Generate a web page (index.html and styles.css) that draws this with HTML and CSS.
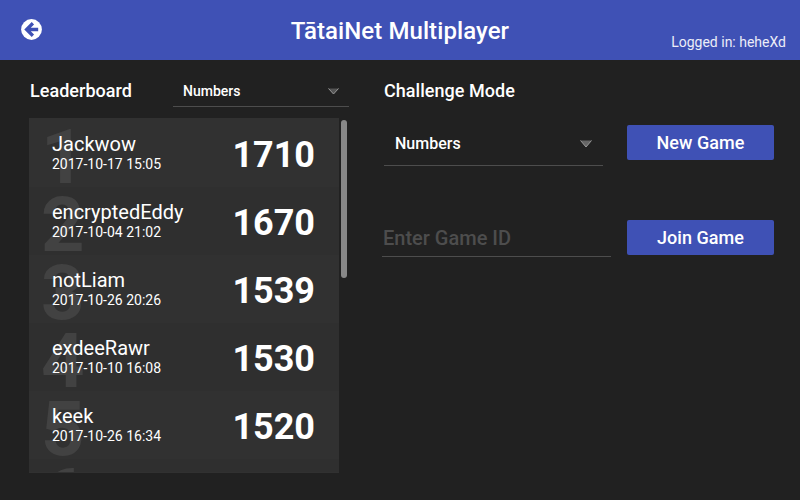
FILE: index.html
```
<!DOCTYPE html>
<html lang="en">
<head>
<meta charset="utf-8">
<title>TātaiNet Multiplayer</title>
<link rel="stylesheet" href="styles.css">
</head>
<body>
<header class="bar">
  <svg class="back" viewBox="0 0 21 21" width="21" height="21"><circle cx="10.5" cy="10.5" r="10.4" fill="#fff"/><path d="M17.200 10.500H6M11.900 4.300L5.600 10.500l6.300 6.200" fill="none" stroke="#3f51b5" stroke-width="3.300"/></svg>
  <h1 class="title">TātaiNet Multiplayer</h1>
  <div class="user">Logged in: heheXd</div>
</header>
<main class="content">
  <section class="left">
    <div class="head">
      <h2 class="heading">Leaderboard</h2>
      <div class="select small"><span>Numbers</span><svg class="arrow" viewBox="0 0 11 7" width="11" height="7"><path d="M.5.5h10l-5 5.500z" fill="#555"/><path d="M.5.5l5 5.500 5-5.500" fill="none" stroke="#999"/></svg></div>
    </div>
    <div class="board">
      <div class="list">
        <div class="row"><span class="rank">1</span><div class="who"><div class="name">Jackwow</div><div class="date">2017-10-17 15:05</div></div><div class="score">1710</div></div>
        <div class="row"><span class="rank">2</span><div class="who"><div class="name">encryptedEddy</div><div class="date">2017-10-04 21:02</div></div><div class="score">1670</div></div>
        <div class="row"><span class="rank">3</span><div class="who"><div class="name">notLiam</div><div class="date">2017-10-26 20:26</div></div><div class="score">1539</div></div>
        <div class="row"><span class="rank">4</span><div class="who"><div class="name">exdeeRawr</div><div class="date">2017-10-10 16:08</div></div><div class="score">1530</div></div>
        <div class="row"><span class="rank">5</span><div class="who"><div class="name">keek</div><div class="date">2017-10-26 16:34</div></div><div class="score">1520</div></div>
        <div class="row"><span class="rank">6</span></div>
      </div>
      <div class="thumb"></div>
    </div>
  </section>
  <section class="right">
    <h2 class="heading mode">Challenge Mode</h2>
    <div class="line first">
      <div class="select large"><span>Numbers</span><svg class="arrow" viewBox="0 0 12 8" width="12" height="8"><path d="M.5.5h11L6 7z" fill="#666"/><path d="M.5.5L6 7l5.500-6.500" fill="none" stroke="#999"/></svg></div>
      <button class="btn">New Game</button>
    </div>
    <div class="line">
      <div class="field">Enter Game ID</div>
      <button class="btn">Join Game</button>
    </div>
  </section>
</main>
</body>
</html>
```

FILE: styles.css
```
* { box-sizing: border-box; }
body {
  margin: 0;
  width: 800px;
  height: 500px;
  overflow: hidden;
  background: #212121;
  color: #fff;
  font-family: Roboto, sans-serif;
}
.bar {
  display: grid;
  grid-template-columns: 200px 400px 200px;
  height: 60px;
  background: #3f51b5;
}
.back { margin: 19px 0 0 21px; }
.title {
  margin: 0;
  padding-top: 15px;
  text-align: center;
  font-size: 24px;
  line-height: 32px;
  font-weight: 500;
  letter-spacing: 0.08px;
}
.user {
  padding: 34px 14px 0 0;
  text-align: right;
  font-size: 14px;
  line-height: 16px;
  color: #ecedf8;
}
.content { display: flex; height: 440px; }
.left { width: 349px; padding-left: 29px; }
.head { display: flex; justify-content: space-between; height: 58px; }
.heading {
  margin: 19px 0 0 1px;
  font-size: 18px;
  line-height: 24px;
  font-weight: 500;
  letter-spacing: 0.04px;
}
.select {
  display: flex;
  justify-content: space-between;
  align-items: center;
  border-bottom: 1px solid #4d4d4d;
  font-weight: 500;
}
.small {
  width: 176px;
  height: 31px;
  margin-top: 16px;
  padding: 0 10px;
  font-size: 14px;
}
.board { display: flex; gap: 2px; height: 355px; }
.list {
  width: 310px;
  padding-top: 1px;
  overflow: hidden;
  background: #313131;
}
.row {
  position: relative;
  display: flex;
  justify-content: space-between;
  height: 68px;
  padding: 13px 24px 0 23px;
  background: #313131;
}
.row:nth-child(even) { background: #2f2f2f; }
.rank {
  position: absolute;
  left: 12px;
  top: -7px;
  font-size: 76px;
  line-height: 90px;
  font-weight: 700;
  color: #424242;
}
.row:last-child { height: 13px; overflow: hidden; }
.who { position: relative; }
.name { font-size: 20px; line-height: 24px; white-space: nowrap; }
.date { font-size: 14px; line-height: 16px; white-space: nowrap; }
.score { font-size: 36px; line-height: 46px; font-weight: 700; }
.thumb {
  width: 6px;
  height: 158px;
  margin-top: 2px;
  border-radius: 3px;
  background: #888;
}
.right { padding-left: 34px; }
.mode { margin-left: 1px; }
.line { display: flex; justify-content: space-between; width: 391px; height: 95px; }
.first { margin-top: 17px; }
.btn {
  width: 147px;
  height: 35px;
  margin-top: 5px;
  padding: 0;
  border: 0;
  border-radius: 2px;
  background: #3f51b5;
  color: #fff;
  font: 500 18px/35px Roboto, sans-serif;
  letter-spacing: 0.04px;
}
.large {
  width: 219px;
  height: 46px;
  margin-left: 1px;
  padding: 2px 11px 0;
  font-size: 16px;
}
.field {
  width: 229px;
  height: 42px;
  margin-left: -1px;
  padding: 11px 0 0 1px;
  border-bottom: 1px solid #4d4d4d;
  font-size: 20px;
  line-height: 24px;
  font-weight: 500;
  color: #4d4d4d;
}
```
